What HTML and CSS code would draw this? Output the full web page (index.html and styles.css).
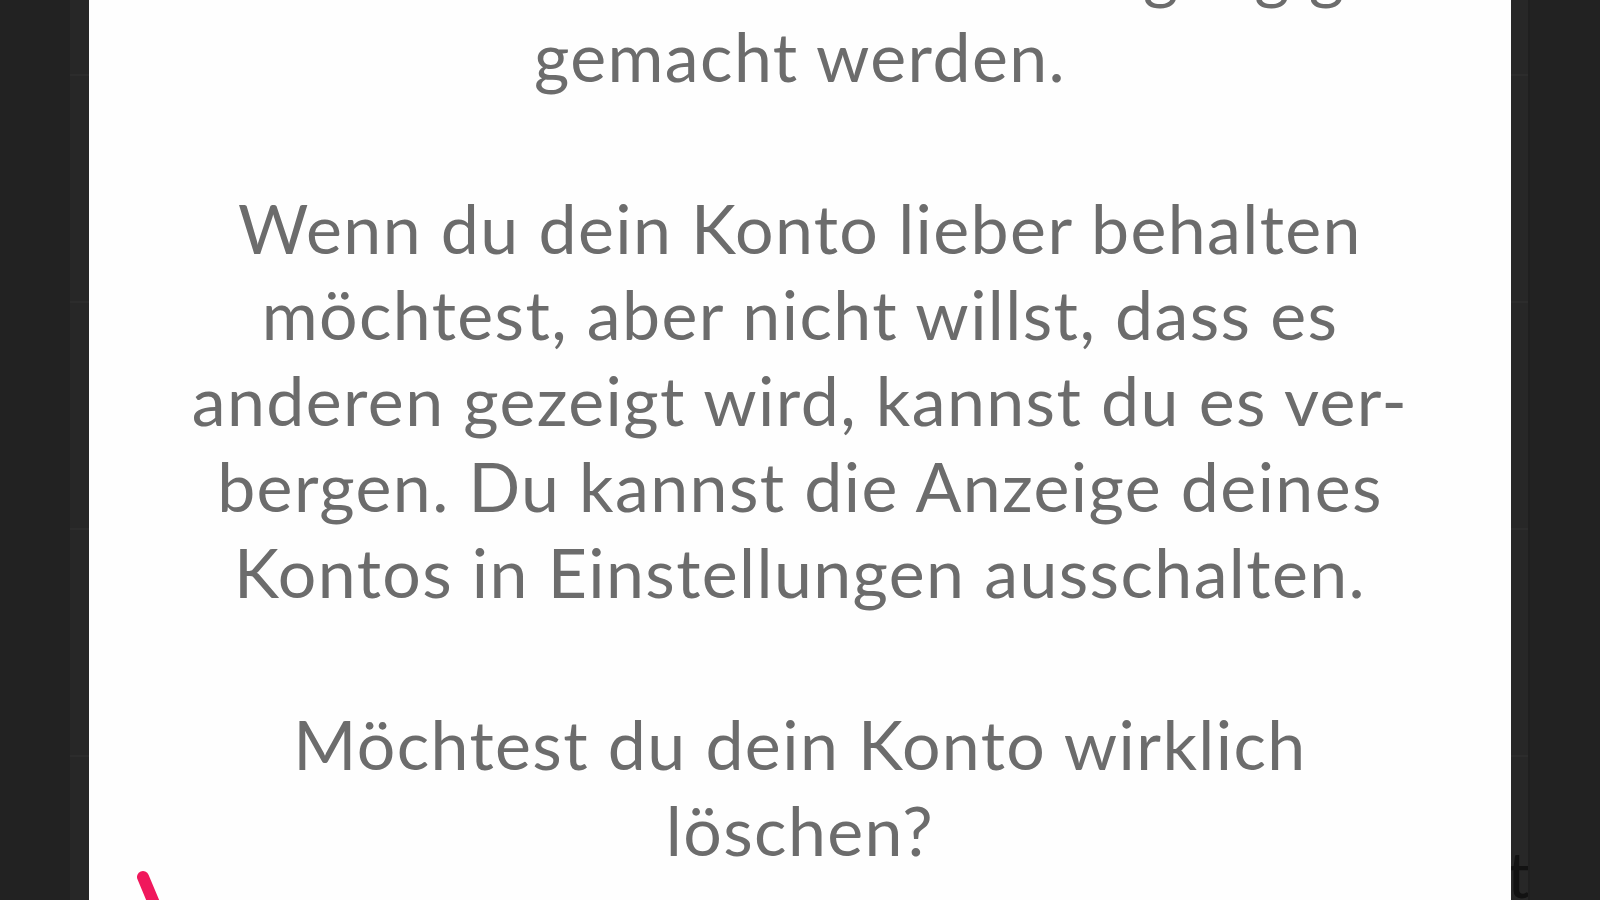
FILE: index.html
```html
<!DOCTYPE html>
<html lang="de">
<head>
<meta charset="utf-8">
<title>Konto löschen</title>
<link rel="stylesheet" href="styles.css">
</head>
<body>
<div class="page">
  <div class="list">
    <div class="row row-first"></div>
    <div class="row"></div>
    <div class="row"></div>
    <div class="row"></div>
    <div class="row row-last"><span class="row-text">Account</span></div>
  </div>
</div>

<div class="modal">
  <div class="modal-body">
    <p class="msg">Das Löschen kann nicht rückgängig<br>gemacht werden.</p>
    <p class="msg">Wenn du dein Konto lieber behalten<br>möchtest, aber nicht willst, dass es<br>anderen gezeigt wird, kannst du es ver-<br>bergen. Du kannst die Anzeige deines<br>Kontos in Einstellungen ausschalten.</p>
    <p class="msg">Möchtest du dein Konto wirklich<br>löschen?</p>
  </div>
  <svg class="mark" width="60" height="40" viewBox="0 0 60 40" aria-hidden="true">
    <path d="M10 17 L23 48" stroke="#f0185c" stroke-width="12" stroke-linecap="round" fill="none"/>
  </svg>
</div>
</body>
</html>
```
FILE: styles.css
```css
html, body {
  margin: 0;
  padding: 0;
  height: 100%;
  overflow: hidden;
}

body {
  background: #222222;
  font-family: Lato, "Open Sans", sans-serif;
}

.page {
  display: flex;
  justify-content: center;
  height: 900px;
}

.list {
  width: 1458px;
  height: 900px;
  background: #272727;
  border-right: 2px solid #1f1f1f;
  display: flex;
  flex-direction: column;
  overflow: hidden;
}

.row {
  flex: 0 0 227px;
  box-sizing: border-box;
  border-bottom: 2px solid #2c2c2c;
  display: flex;
  align-items: flex-end;
  justify-content: flex-end;
}

.row-first {
  flex-basis: 76px;
}

.row-last {
  flex: 1 1 auto;
  border-bottom: none;
}

.row-text {
  font-size: 64px;
  color: #121212;
  line-height: 1;
  margin-bottom: -6px;
  margin-right: -2px;
}

.modal {
  position: fixed;
  top: 0;
  bottom: 0;
  left: 89px;
  width: 1422px;
  background: #fefefe;
  overflow: hidden;
}

.modal-body {
  margin-top: -73px;
  display: flex;
  flex-direction: column;
  gap: 86px;
}

.msg {
  margin: 0;
  text-align: center;
  font-size: 68px;
  line-height: 86px;
  color: #6c6c6c;
  letter-spacing: 1.4px;
}

.mark {
  position: absolute;
  left: 44px;
  bottom: 0;
}
```
